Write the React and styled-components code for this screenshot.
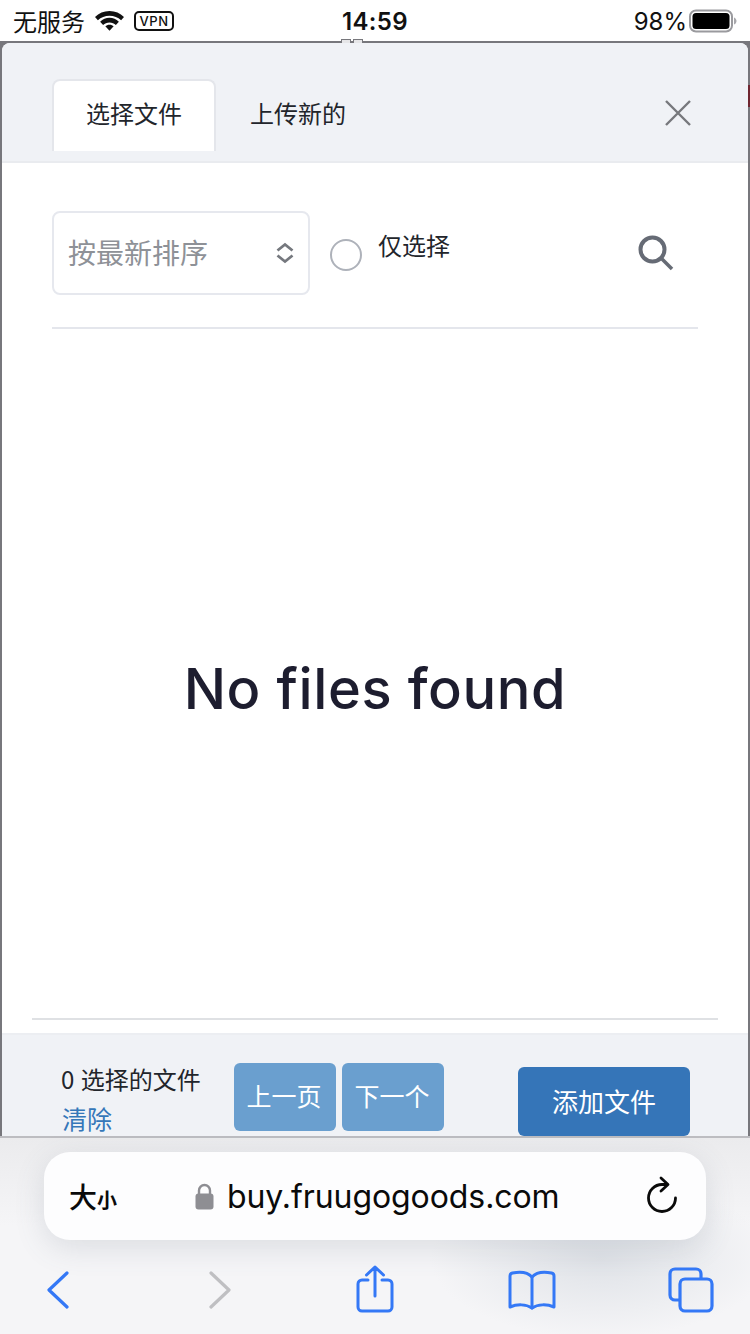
import React from "react";
import styled, { createGlobalStyle } from "styled-components";

const Global = createGlobalStyle`
  html, body { margin: 0; padding: 0; background: #fff; }
  body { font-family: "Noto Sans CJK SC", "Noto Sans", sans-serif; }
  * { box-sizing: border-box; }
`;

const cjk = `"Noto Sans CJK SC", sans-serif`;
const latin = `Inter, "Noto Sans CJK SC", sans-serif`;

const Page = styled.div`
  width: 750px;
  height: 1334px;
  display: flex;
  flex-direction: column;
  overflow: hidden;
  background: #fff;
`;

const StatusBar = styled.div`
  height: 41px;
  flex: none;
  display: grid;
  grid-template-columns: 1fr auto 1fr;
  align-items: center;
  padding: 0 13px;
  color: #111;
  font-size: 24px;
`;

const StatusLeft = styled.div`
  display: flex;
  align-items: center;
  gap: 10px;
  font-family: ${cjk};
`;

const StatusTime = styled.div`
  font-family: ${latin};
  font-weight: 600;
  font-size: 24px;
  letter-spacing: 0.4px;
  padding-top: 2px;
`;

const StatusRight = styled.div`
  display: flex;
  align-items: center;
  justify-content: flex-end;
  gap: 2px;
  font-family: ${latin};
  font-size: 24px;
  padding-top: 1px;
`;

const Backdrop = styled.div`
  flex: 1;
  min-height: 0;
  background: #77777c;
  padding: 2px 2px 0;
  position: relative;
`;

/* bits of the page behind the modal that show round its edge */
const EdgeMark = styled.div`
  position: absolute;
  right: 0;
  top: 44px;
  width: 2px;
  height: 22px;
  background: #6f2630;
`;

const TopMarks = styled.div`
  position: absolute;
  left: 341px;
  top: -2px;
  display: flex;
  gap: 2px;
`;

const TopMark = styled.span`
  width: 10px;
  height: 4px;
  border: 1px solid #77777c;
  border-bottom: 0;
  background: #e6e6e8;
`;

const Modal = styled.div`
  height: 100%;
  display: flex;
  flex-direction: column;
  background: #fff;
  border-radius: 8px 8px 0 0;
  overflow: hidden;
`;

const ModalHead = styled.div`
  height: 120px;
  flex: none;
  background: #f0f2f6;
  border-bottom: 2px solid #e9ebef;
  display: flex;
  align-items: flex-start;
  justify-content: space-between;
  padding: 36px 56px 0 50px;
`;

const Tabs = styled.div`
  display: flex;
  align-items: flex-start;
`;

const Tab = styled.div`
  width: ${(p) => (p.$active ? "164px" : "auto")};
  height: 72px;
  display: flex;
  align-items: center;
  justify-content: center;
  padding: ${(p) => (p.$active ? "0 0 8px" : "0 32px 8px")};
  font-size: 24px;
  color: #22252b;
  background: ${(p) => (p.$active ? "#fff" : "transparent")};
  border: 2px solid ${(p) => (p.$active ? "#e4e6eb" : "transparent")};
  border-bottom: 0;
  border-radius: 8px 8px 0 0;
`;

const CloseBtn = styled.div`
  width: 28px;
  height: 28px;
  margin-top: 20px;
  color: #77787c;
`;

const ModalBody = styled.div`
  flex: 1;
  min-height: 0;
  display: flex;
  flex-direction: column;
  padding: 48px 30px 13px;
`;

const FilterRow = styled.div`
  margin: 0 20px;
  height: 118px;
  flex: none;
  border-bottom: 2px solid #e4e6ec;
  display: flex;
  align-items: flex-start;
`;

const SortSelect = styled.div`
  width: 258px;
  height: 84px;
  flex: none;
  border: 2px solid #e6e8ee;
  border-radius: 8px;
  display: flex;
  align-items: center;
  justify-content: space-between;
  padding: 0 13px 3px 14px;
  font-size: 28px;
  color: #8e9197;
`;

const ArrowWrap = styled.span`
  display: flex;
  margin-top: 3px;
`;

const OnlySelected = styled.label`
  display: flex;
  align-items: flex-start;
  margin-left: 20px;
  font-size: 24px;
  color: #22252b;
  line-height: 36px;
`;

const Radio = styled.span`
  width: 32px;
  height: 32px;
  margin: 28px 16px 0 0;
  border: 2px solid #aeb2ba;
  border-radius: 50%;
`;

const OnlyText = styled.span`
  margin-top: 16px;
`;

const SearchBtn = styled.div`
  width: 38px;
  height: 38px;
  margin: 23px 23px 0 auto;
  color: #666b75;
`;

const EmptyState = styled.div`
  flex: 1;
  min-height: 0;
  display: flex;
  align-items: center;
  justify-content: center;
  padding-top: 30px;
  font-family: Inter, sans-serif;
  font-weight: 500;
  font-size: 56px;
  letter-spacing: 0.6px;
  color: #1d1d2f;
`;

const BodyRule = styled.div`
  height: 2px;
  flex: none;
  background: #dfe1e4;
`;

const ModalFoot = styled.div`
  height: 103px;
  flex: none;
  background: #f0f2f6;
  border-top: 2px solid #eceef2;
  display: flex;
  align-items: flex-start;
  padding: 28px 58px 0 59px;
`;

const SelectionInfo = styled.div`
  width: 173px;
  flex: none;
  font-size: 24px;
  line-height: 36px;
  color: #22252b;
  margin-top: -2px;
  word-spacing: 1px;
`;

const ClearLink = styled.div`
  color: #3577b9;
  font-size: 25px;
  line-height: 32px;
  margin: 5px 0 0 1px;
`;

const Pager = styled.div`
  display: flex;
  gap: 6px;
`;

const PageBtn = styled.div`
  width: 102px;
  height: 68px;
  border-radius: 6px;
  background: #6a9fcf;
  color: #fff;
  font-size: 25px;
  display: flex;
  align-items: center;
  justify-content: center;
  padding: 0 2px 4px 0;
`;

const AddBtn = styled.div`
  margin: 4px 0 0 auto;
  width: 172px;
  height: 69px;
  border-radius: 6px;
  background: #3575b8;
  color: #fff;
  font-size: 26px;
  display: flex;
  align-items: center;
  justify-content: center;
  padding-bottom: 3px;
`;

const Toolbar = styled.div`
  height: 198px;
  flex: none;
  border-top: 2px solid #bdbdc1;
  background: radial-gradient(ellipse 170px 80px at 600px 120px, #dfe2e7, rgba(223, 226, 231, 0)),
    linear-gradient(#ebebed, #f5f5f7 45%, #f5f5f7);
  padding: 14px 44px 0;
`;

const UrlBar = styled.div`
  height: 88px;
  border-radius: 26px;
  background: #fdfdfe;
  box-shadow: 0 8px 30px rgba(90, 100, 120, 0.16);
  display: flex;
  align-items: center;
  padding: 0 28px 0 25px;
`;

const TextSize = styled.div`
  width: 126px;
  flex: none;
  font-family: ${cjk};
  font-weight: 500;
  font-size: 28px;
  color: #0a0a0a;
  small {
    font-size: 20px;
    font-weight: 700;
  }
`;

const Address = styled.div`
  flex: 1;
  display: flex;
  align-items: center;
  gap: 13px;
  font-family: ${latin};
  font-size: 32px;
  letter-spacing: -0.08px;
  color: #0a0a0a;
`;

const ReloadWrap = styled.div`
  display: flex;
  margin-top: -3px;
`;

const NavRow = styled.div`
  height: 96px;
  display: flex;
  align-items: center;
  margin-left: 3px;
  padding-top: 3px;
`;

const NavSlot = styled.div`
  flex: none;
  display: flex;
  margin-left: ${(p) => p.$gap}px;
  margin-top: ${(p) => p.$lift || 0}px;
  color: ${(p) => (p.$off ? "#bfbfc2" : "#3478f6")};
`;

const WifiIcon = () => (
  <svg width="29" height="22" viewBox="1 3.500 30 20.500" fill="currentColor">
    <path d="M16 3.500C10 3.500 5 5.800 1 9.500l3 3.400C7.200 9.900 11.400 8.200 16 8.200s8.800 1.700 12 4.700l3-3.400C27 5.800 22 3.500 16 3.500z" />
    <path d="M16 10.500c-3.700 0-7 1.400-9.700 3.900l3.100 3.400c1.700-1.600 4-2.600 6.600-2.600s4.900 1 6.600 2.600l3.100-3.400C23 11.900 19.700 10.500 16 10.500z" />
    <path d="M16 17.500c-1.800 0-3.200.6-4.300 1.700l4.300 4.600 4.300-4.600c-1.100-1.100-2.500-1.700-4.300-1.700z" />
  </svg>
);

const VpnIcon = () => (
  <svg width="40" height="20" viewBox="0 0 40 20">
    <rect x="1" y="1" width="38" height="18" rx="4" fill="none" stroke="#111" strokeWidth="2" />
    <text x="20" y="15" textAnchor="middle" fontFamily="Inter, sans-serif" fontSize="13" fontWeight="500" letterSpacing="0.6" fill="#111">VPN</text>
  </svg>
);

const BatteryIcon = () => (
  <svg width="48" height="24" viewBox="0 0 48 24">
    <rect x="1" y="1.500" width="42" height="21" rx="6" fill="none" stroke="#9a9a9e" strokeWidth="2" />
    <rect x="3.500" y="4" width="37" height="16" rx="3.500" fill="#000" />
    <path d="M45 8.500c1.500.5 2.500 2 2.500 3.500s-1 3-2.500 3.500z" fill="#a8a8ac" />
  </svg>
);

const CloseIcon = () => (
  <svg width="28" height="28" viewBox="0 0 28 28" fill="none" stroke="currentColor" strokeWidth="2.400">
    <path d="M2 2l24 24M26 2L2 26" />
  </svg>
);

const UpDownIcon = () => (
  <svg width="20" height="22" viewBox="0 0 20 22" fill="none" stroke="#75787e" strokeWidth="2.800">
    <path d="M2.500 8.500L10 2.500l7.500 6M2.500 13.500l7.500 6 7.500-6" />
  </svg>
);

const SearchIcon = () => (
  <svg width="38" height="38" viewBox="0 0 38 38" fill="none" stroke="currentColor">
    <circle cx="15.500" cy="15.500" r="12" strokeWidth="4" />
    <path d="M24 24l11 11" strokeWidth="3.600" />
  </svg>
);

const LockIcon = () => (
  <svg width="19" height="27" viewBox="0 0 19 27">
    <path d="M4 12V7.500a5.500 5.500 0 0 1 11 0V12" fill="none" stroke="#8e8e93" strokeWidth="2.400" />
    <rect x="0.500" y="10.500" width="18" height="16" rx="3" fill="#8e8e93" />
  </svg>
);

const ReloadIcon = () => (
  <svg width="32" height="38" viewBox="0 0 32 38" fill="none" stroke="#0a0a0a" strokeWidth="2.800" strokeLinecap="round" strokeLinejoin="round">
    <path d="M29.500 22a13.500 13.500 0 1 1-13.500-13.500h4" />
    <path d="M15 2l7 6.500-7 6.500" />
  </svg>
);

const ChevronIcon = ({ flip }) => (
  <svg width="22" height="38" viewBox="0 0 22 38" fill="none" stroke="currentColor" strokeWidth="3.200" strokeLinecap="round" strokeLinejoin="round">
    <path d={flip ? "M2 2l18 17L2 36" : "M20 2L2 19l18 17"} />
  </svg>
);

const ShareIcon = () => (
  <svg width="38" height="48" viewBox="0 0 38 48" fill="none" stroke="currentColor" strokeWidth="3" strokeLinecap="round" strokeLinejoin="round">
    <path d="M12 15H6a4 4 0 0 0-4 4v23a4 4 0 0 0 4 4h26a4 4 0 0 0 4-4V19a4 4 0 0 0-4-4h-6" />
    <path d="M19 31V2M10.500 10L19 2l8.500 8" />
  </svg>
);

const BookIcon = () => (
  <svg width="48" height="40" viewBox="0 0 48 40" fill="none" stroke="currentColor" strokeWidth="3" strokeLinecap="round" strokeLinejoin="round">
    <path d="M24 7C20 2.500 12 1.500 4.500 3 2.500 3.500 2 4.500 2 6v31c7-3 16-3 22 1 6-4 15-4 22-1V6c0-1.500-.5-2.500-2.500-3C36 1.500 28 2.500 24 7z" />
    <path d="M24 7v31" />
  </svg>
);

const TabsIcon = () => (
  <svg width="46" height="46" viewBox="0 0 46 46" fill="none" stroke="currentColor" strokeWidth="3.200" strokeLinecap="round">
    <path d="M11 33H7a5 5 0 0 1-5-5V7a5 5 0 0 1 5-5h21a5 5 0 0 1 5 5v4" />
    <rect x="12" y="12" width="32" height="32" rx="5" />
  </svg>
);

export default function App() {
  return (
    <Page>
      <Global />
      <StatusBar>
        <StatusLeft>
          无服务
          <WifiIcon />
          <VpnIcon />
        </StatusLeft>
        <StatusTime>14:59</StatusTime>
        <StatusRight>
          98%
          <BatteryIcon />
        </StatusRight>
      </StatusBar>

      <Backdrop>
        <EdgeMark />
        <TopMarks>
          <TopMark />
          <TopMark />
        </TopMarks>
        <Modal>
          <ModalHead>
            <Tabs>
              <Tab $active>选择文件</Tab>
              <Tab>上传新的</Tab>
            </Tabs>
            <CloseBtn>
              <CloseIcon />
            </CloseBtn>
          </ModalHead>

          <ModalBody>
            <FilterRow>
              <SortSelect>
                按最新排序
                <ArrowWrap>
                  <UpDownIcon />
                </ArrowWrap>
              </SortSelect>
              <OnlySelected>
                <Radio />
                <OnlyText>仅选择</OnlyText>
              </OnlySelected>
              <SearchBtn>
                <SearchIcon />
              </SearchBtn>
            </FilterRow>
            <EmptyState>No files found</EmptyState>
            <BodyRule />
          </ModalBody>

          <ModalFoot>
            <SelectionInfo>
              0 选择的文件
              <ClearLink>清除</ClearLink>
            </SelectionInfo>
            <Pager>
              <PageBtn>上一页</PageBtn>
              <PageBtn>下一个</PageBtn>
            </Pager>
            <AddBtn>添加文件</AddBtn>
          </ModalFoot>
        </Modal>
      </Backdrop>

      <Toolbar>
        <UrlBar>
          <TextSize>
            大<small>小</small>
          </TextSize>
          <Address>
            <LockIcon />
            buy.fruugogoods.com
          </Address>
          <ReloadWrap>
            <ReloadIcon />
          </ReloadWrap>
        </UrlBar>
        <NavRow>
          <NavSlot $gap={0}>
            <ChevronIcon />
          </NavSlot>
          <NavSlot $gap={140} $off>
            <ChevronIcon flip />
          </NavSlot>
          <NavSlot $gap={125} $lift={-2}>
            <ShareIcon />
          </NavSlot>
          <NavSlot $gap={114}>
            <BookIcon />
          </NavSlot>
          <NavSlot $gap={112}>
            <TabsIcon />
          </NavSlot>
        </NavRow>
      </Toolbar>
    </Page>
  );
}
